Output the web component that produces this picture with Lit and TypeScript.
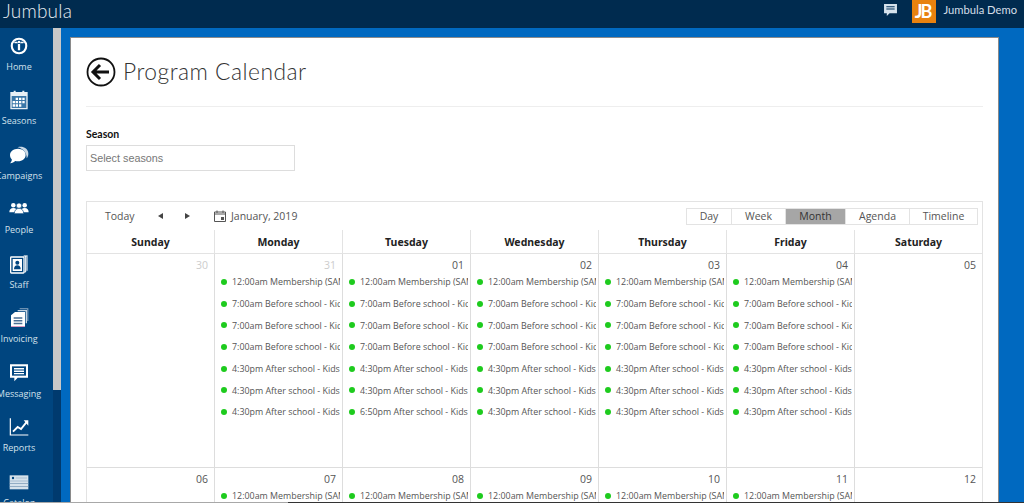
import { LitElement, html, css, svg } from "lit";
import { customElement } from "lit/decorators.js";

const icons: Record<string, unknown> = {
  Home: svg`<circle cx="15" cy="15" r="12.500" fill="#fff"/><circle cx="15" cy="15" r="9.300" fill="#00457f"/><path d="M7.500 8.500h5l1 2.500h-5zM22.500 8.500h-5l-1 2.500h5z" fill="#fff"/><circle cx="15" cy="9" r="1.900" fill="#fff"/><path d="M13.300 12h3.400v9.500h-3.400z" fill="#fff"/>`,
  Seasons: svg`<path d="M2 3h5V1h3v2h10V1h3v2h5v26H2z" fill="#e8eff5"/><path d="M4 9h22v18H4z" fill="#3b77a8"/><path d="M10 11.500h3.500v3.500H10zM15 11.500h3.500v3.500H15zM20 11.500h3.500v3.500H20zM5.500 16.500H9V20H5.500zM10 16.500h3.500V20H10zM15 16.500h3.500V20H15zM20 16.500h3.500V20H20zM5.500 21.500H9V25H5.500zM10 21.500h3.500V25H10zM15 21.500h3.500V25H15z" fill="#fff"/>`,
  Campaigns: svg`<path d="M13 3.500C20 1 29 5 29 13c0 3-1 5-2.500 7C27 12 21 5 13 3.500z" fill="#c9d8e5"/><path d="M13.500 5.500c6.500 0 11.500 4.200 11.500 9.500s-5 9.500-11.500 9.500c-1.500 0-3-.2-4-.6C7.500 25.500 5 27 1.500 27.500c1.500-1.500 2.800-3.800 2.800-5.800C2.500 20 1.500 17.500 1.500 15c0-5.300 5.500-9.500 12-9.500z" fill="#fff"/>`,
  People: svg`<g fill="#fff"><circle cx="6.500" cy="9.500" r="3.400"/><circle cx="23.500" cy="9.500" r="3.400"/><path d="M.5 20c0-4 2-6.500 6-6.500s6 2.500 6 6.500zM17.500 20c0-4 2-6.500 6-6.500s6 2.500 6 6.500z"/><circle cx="15" cy="10" r="4" stroke="#00457f"/><path d="M8 22c0-5 3-8 7-8s7 3 7 8z" stroke="#00457f"/></g>`,
  Staff: svg`<path d="M22 2h6v23h-2V4h-4z" fill="#c3d3e0"/><rect x="2.500" y="4.500" width="20" height="24" rx="1" fill="none" stroke="#fff" stroke-width="2"/><path d="M25 3v24h-2" fill="none" stroke="#fff" stroke-width="1.500"/><rect x="5.500" y="7.500" width="14" height="18" fill="#fff"/><circle cx="12.500" cy="13" r="3" fill="#00457f"/><path d="M7.500 23c0-4 2-6 5-6s5 2 5 6z" fill="#00457f"/>`,
  Invoicing: svg`<path d="M13 3h14v20h-2V5H13z" fill="#c5d4e2"/><path d="M16 .5h13v19h-1.500V2H16z" fill="#8fa9c2"/><path d="M9 6h15v22H3V11z" fill="#fff"/><path d="M7 14h13v2.200H7zM7 18h13v2.200H7zM7 22h13v2.200H7z" fill="#4a6f95"/><path d="M3 27.500h21v1H3z" fill="#e47cb0"/>`,
  Messaging: svg`<path d="M1.500 2h27v20H13l-5 5.500V22H1.500z" fill="#fff"/><path d="M4.500 5h21v14H4.500z" fill="#00457f"/><path d="M7.500 7.500h15v2.300h-15zM7.500 11.200h15v2.300h-15zM7.500 15h15v2h-15z" fill="#fff"/>`,
  Reports: svg`<path d="M2 2v25h27" fill="none" stroke="#fff" stroke-width="1.800"/><path d="M6 22l7-7 5 3 8-10" fill="none" stroke="#fff" stroke-width="2.800"/><path d="M22 5h7v8z" fill="#fff"/>`,
  Catalog: svg`<path d="M1 5h28v21H1z" fill="#d6e2ec"/><circle cx="6" cy="9" r="1.800" fill="#00457f"/><path d="M10 8.500h17v1H10zM1 13h28v1H1zM1 17h28v1H1zM1 21h28v1H1z" fill="#7d9cb8"/>`,
};

const navItems = ["Home", "Seasons", "Campaigns", "People", "Staff", "Invoicing", "Messaging", "Reports", "Catalog"];
const days = ["Sunday", "Monday", "Tuesday", "Wednesday", "Thursday", "Friday", "Saturday"];
const views = ["Day", "Week", "Month", "Agenda", "Timeline"];

function events(last: string) {
  return [
    "12:00am Membership (SAMPLE)",
    "7:00am Before school - Kids Club",
    "7:00am Before school - Kids Club",
    "7:00am Before school - Kids Club",
    "4:30pm After school - Kids Club",
    "4:30pm After school - Kids Club",
    last,
  ];
}
const std = events("4:30pm After school - Kids Club");
const week1 = [
  { d: "30", muted: true, ev: [] as string[] },
  { d: "31", muted: true, ev: std },
  { d: "01", ev: events("6:50pm After school - Kids Club") },
  { d: "02", ev: std },
  { d: "03", ev: std },
  { d: "04", ev: std },
  { d: "05", ev: [] as string[] },
];
const member = ["12:00am Membership (SAMPLE)"];
const week2 = [
  { d: "06", ev: [] as string[] },
  { d: "07", ev: member },
  { d: "08", ev: member },
  { d: "09", ev: member },
  { d: "10", ev: member },
  { d: "11", ev: member },
  { d: "12", ev: [] as string[] },
];

@customElement("app-root")
export class AppRoot extends LitElement {
  static styles = css`
    :host { display: block; width: 1024px; height: 503px; overflow: hidden; font-family: "Open Sans", "Noto Sans", sans-serif; background: #0069c0; }
    .top { height: 28px; background: #002b4f; display: flex; align-items: flex-start; color: #fff; }
    .brand { font-family: "Lato", sans-serif; font-weight: 300; font-size: 19px; line-height: 22px; letter-spacing: .2px; color: #e6ecf2; margin-left: 3px; flex: 1; }
    .chat { width: 13px; height: 12px; margin-right: 15px; margin-top: 4px; }
    .logo { width: 24px; height: 23px; background: #e8820f; color: #fff; font: 700 18px/23px "Lato", sans-serif; letter-spacing: -2px; text-align: center; box-sizing: border-box; padding-right: 2px; }
    .user { font-family: "Lato", sans-serif; font-size: 11.200px; line-height: 20px; color: #d5dfe8; margin-left: 8px; margin-right: 7px; white-space: nowrap; }
    .body { display: flex; height: 474px; }
    .side { width: 53px; background: #00457f; overflow: hidden; flex: none; }
    .item { width: 38px; height: 54.450px; display: flex; flex-direction: column; align-items: center; color: #d3e1ec; font-size: 9px; line-height: 12px; white-space: nowrap; }
    .item svg { width: 20px; height: 20px; margin-top: 8px; margin-bottom: 5px; flex: none; }
    .item span { display: block; }
    .track { width: 8px; background: #003a6e; flex: none; }
    .thumb { height: 362px; background: #c8c8c8; }
    .main { flex: 1; padding: 9px 25px 0 9px; min-width: 0; }
    .card { background: #fff; border: 1px solid #8a8a8a; border-bottom: 0; height: 465px; box-sizing: border-box; padding: 0 15px; overflow: hidden; }
    .head { height: 69px; display: flex; align-items: center; gap: 7px; border-bottom: 1px solid #eeeeee; box-sizing: border-box; }
    .back { width: 30px; height: 30px; flex: none; }
    .title { font-family: "Lato", sans-serif; font-weight: 300; font-size: 22.800px; color: #333; letter-spacing: .5px; margin-top: -3px; }
    .lbl { font-family: "Lato", sans-serif; font-weight: 700; font-size: 10.500px; color: #111; margin-top: 21px; line-height: 13px; }
    .select { width: 209px; height: 26px; border: 1px solid #ddd; box-sizing: border-box; margin-top: 4px; font: 10.800px "Liberation Sans", sans-serif; color: #777; padding-left: 3px; display: flex; align-items: center; }
    .sched { margin-top: 30px; border: 1px solid #e3e3e3; border-bottom: 0; width: 897px; box-sizing: border-box; }
    .bar { height: 28px; display: flex; align-items: center; font-size: 10.500px; color: #555; padding-right: 4px; }
    .today { margin-left: 18px; width: 41.500px; }
    .nav { width: 27px; display: flex; justify-content: center; }
    .nav svg { width: 5px; height: 6px; }
    .cal { width: 12px; height: 12px; margin-left: 13.500px; margin-right: 5px; }
    .date { flex: 1; }
    .views { display: flex; border: 1px solid #e3e3e3; height: 17px; box-sizing: border-box; align-items: stretch; font-size: 10.500px; }
    .view { display: flex; align-items: center; justify-content: center; border-left: 1px solid #e3e3e3; color: #555; box-sizing: border-box; }
    .view:first-child { border-left: 0; }
    .view.on { background: #a6a6a6; color: #333; }
    .grid { display: grid; grid-template-columns: 127px repeat(6, 128px); }
    .dh { height: 24px; display: flex; align-items: center; justify-content: center; font-family: "Noto Sans", sans-serif; font-weight: 700; font-size: 10.500px; color: #222; border-bottom: 1px solid #e3e3e3; border-left: 1px solid #e3e3e3; box-sizing: border-box; }
    .dh:first-child, .cell:nth-child(7n+1) { border-left: 0; }
    .cell { height: 214px; border-left: 1px solid #ddd; border-bottom: 1px solid #ddd; box-sizing: border-box; overflow: hidden; padding: 4px 2px 0 6px; }
    .num { text-align: right; padding-right: 4px; font-size: 10.500px; color: #555; line-height: 15px; height: 13px; }
    .num.muted { color: #ccc; }
    .evs { display: flex; flex-direction: column; }
    .ev { display: flex; align-items: center; height: 21.700px; gap: 5px; font-size: 8.900px; color: #555; white-space: nowrap; overflow: hidden; }
    .dot { width: 6px; height: 6px; border-radius: 50%; background: #1ecb1e; flex: none; }
    .edge { height: 1px; background: linear-gradient(to right, #a8a8a8 288px, #333 288px); }
  `;

  render() {
    const widths: Record<string, number> = { Day: 44, Week: 54, Month: 60, Agenda: 64, Timeline: 68 };
    return html`
      <div class="top">
        <div class="brand">Jumbula</div>
        <svg class="chat" viewBox="0 0 14 13"><path d="M0 0h14v10H6l-3 3v-3H0z" fill="#d5e2ec"/><path d="M2.500 2.500h9v1h-9zM2.500 5h9v1h-9z" fill="#00305a"/></svg>
        <div class="logo">JB</div>
        <div class="user">Jumbula Demo</div>
      </div>
      <div class="body">
        <div class="side">
          ${navItems.map((n) => html`<div class="item"><svg viewBox="0 0 30 30">${icons[n]}</svg><span>${n}</span></div>`)}
        </div>
        <div class="track"><div class="thumb"></div></div>
        <div class="main">
          <div class="card">
            <div class="head">
              <svg class="back" viewBox="0 0 30 30"><circle cx="15" cy="15" r="13.500" fill="none" stroke="#111" stroke-width="1.800"/><path d="M7 15h16M14 8l-7 7 7 7" fill="none" stroke="#111" stroke-width="3"/></svg>
              <div class="title">Program Calendar</div>
            </div>
            <div class="lbl">Season</div>
            <div class="select">Select seasons</div>
            <div class="sched">
              <div class="bar">
                <div class="today">Today</div>
                <div class="nav"><svg viewBox="0 0 5 6"><path d="M5 0v6L0 3z" fill="#444"/></svg></div>
                <div class="nav"><svg viewBox="0 0 5 6"><path d="M0 0v6l5-3z" fill="#444"/></svg></div>
                <svg class="cal" viewBox="0 0 12 12"><path d="M.5 2h11v9.500H.5zM.5 4h11M3 .5V3M9 .5V3" fill="none" stroke="#555"/><path d="M7 7h3v3H7z" fill="#555"/></svg>
                <div class="date">January, 2019</div>
                <div class="views">
                  ${views.map((v) => html`<div class="view ${v === "Month" ? "on" : ""}" style="width:${widths[v]}px">${v}</div>`)}
                </div>
              </div>
              <div class="grid">
                ${days.map((d) => html`<div class="dh">${d}</div>`)}
                ${[...week1, ...week2].map((c) => html`
                  <div class="cell">
                    <div class="num ${c.muted ? "muted" : ""}">${c.d}</div>
                    <div class="evs">${c.ev.map((e) => html`<div class="ev"><span class="dot"></span><span>${e}</span></div>`)}</div>
                  </div>`)}
              </div>
            </div>
          </div>
        </div>
      </div>
      <div class="edge"></div>
    `;
  }
}
